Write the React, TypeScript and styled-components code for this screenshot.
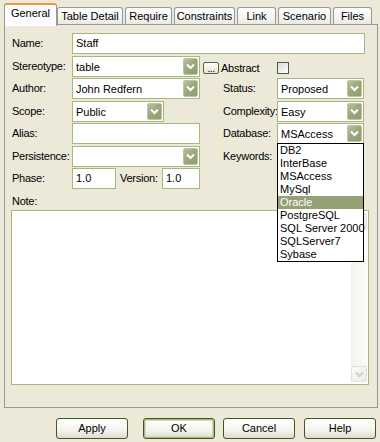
import React from "react";
import styled, { createGlobalStyle } from "styled-components";

const GlobalStyle = createGlobalStyle`
  html, body {
    margin: 0;
    padding: 0;
    background: #ece9d8;
  }
  body {
    font-family: "Liberation Sans", Arial, sans-serif;
    font-size: 11px;
    letter-spacing: -0.25px;
    color: #000;
  }
`;

const Dialog = styled.div`
  width: 380px;
  height: 442px;
  background: #ece9d8;
  display: flex;
  flex-direction: column;
  overflow: hidden;
`;

const TabStrip = styled.div`
  display: flex;
  align-items: flex-end;
  height: 24px;
  padding-left: 4px;
`;

const Tab = styled.div<{ $w: number; $active?: boolean; $first?: boolean }>`
  box-sizing: border-box;
  width: ${(p) => p.$w}px;
  height: ${(p) => (p.$active ? 23 : 17)}px;
  margin-left: ${(p) => (p.$first ? 0 : 2)}px;
  margin-bottom: ${(p) => (p.$active ? -2 : 0)}px;
  position: relative;
  z-index: ${(p) => (p.$active ? 2 : 1)};
  border: 1px solid #919b9c;
  border-bottom: none;
  border-top: ${(p) => (p.$active ? "2px solid #e39a41" : "1px solid #919b9c")};
  border-radius: 3px 3px 0 0;
  background: ${(p) =>
    p.$active ? "#fcfcfe" : "linear-gradient(#ffffff, #f3f2ee 70%, #e9e8e2)"};
  text-align: center;
  line-height: ${(p) => (p.$active ? 17 : 16)}px;
  letter-spacing: 0;
  white-space: nowrap;
  overflow: hidden;
`;

const Panel = styled.div`
  box-sizing: border-box;
  width: 374px;
  height: 384px;
  margin-left: 4px;
  border: 1px solid #919b9c;
  background: #ece9d8;
  padding: 8px 0 0 6px;
  display: flex;
  flex-direction: column;
`;

const Fields = styled.div`
  display: grid;
  grid-template-rows: 23px 22px 23px 22px 23px 22px 22px;
`;

const Row = styled.div`
  display: grid;
  grid-template-columns: 61px 150px 55px 88px;
  align-items: start;
`;

const Label = styled.div`
  height: 21px;
  line-height: 21px;
  padding-left: 1px;
  white-space: nowrap;
`;

const FieldCell = styled.div<{ $span?: boolean }>`
  display: flex;
  align-items: flex-start;
  grid-column: ${(p) => (p.$span ? "2 / span 3" : "auto")};
`;

const TextBox = styled.div<{ $w?: number }>`
  box-sizing: border-box;
  width: ${(p) => (p.$w ? `${p.$w}px` : "100%")};
  height: 21px;
  border: 1px solid #a5b880;
  background: #fff;
  padding-left: 3px;
  line-height: 19px;
  letter-spacing: 0;
  white-space: nowrap;
  overflow: hidden;
`;

const ComboBox = styled.div<{ $w: number }>`
  position: relative;
  box-sizing: border-box;
  width: ${(p) => p.$w}px;
  height: 21px;
  border: 1px solid #a5b880;
  background: #fff;
  display: flex;
  align-items: center;
  padding: 0 1px 0 3px;
  letter-spacing: 0;
`;

const ComboText = styled.span`
  flex: 1;
  white-space: nowrap;
  overflow: hidden;
`;

const ArrowButton = styled.div`
  box-sizing: border-box;
  width: 15px;
  height: 17px;
  border: 1px solid #bcc59f;
  border-radius: 2px;
  background: linear-gradient(135deg, #b8c29b 0%, #9ca87e 45%, #8f9b70 100%);
  display: flex;
  align-items: center;
  justify-content: center;
`;

const DotsButton = styled.div`
  box-sizing: border-box;
  width: 16px;
  height: 12px;
  margin: 6px 0 0 3px;
  border: 1px solid #52683a;
  border-radius: 2px;
  background: linear-gradient(#ffffff, #e6e3d6);
  font-size: 10px;
  line-height: 12px;
  text-align: center;
  letter-spacing: -0.5px;
`;

const InlineLabel = styled.div<{ $w: number; $ml?: number }>`
  width: ${(p) => p.$w}px;
  margin-left: ${(p) => p.$ml ?? 0}px;
  height: 21px;
  line-height: ${(p) => (p.$ml === 2 ? 24 : 21)}px;
  white-space: nowrap;
`;

const CheckBox = styled.div`
  box-sizing: border-box;
  width: 12px;
  height: 12px;
  margin-top: 6px;
  border: 1px solid #4f5b45;
  background: linear-gradient(135deg, #dcdbd3, #ffffff);
`;

const DropList = styled.div`
  position: absolute;
  top: 100%;
  left: -1px;
  width: 87px;
  box-sizing: border-box;
  border: 1px solid #000;
  background: #fff;
  z-index: 10;
`;

const DropItem = styled.div<{ $selected?: boolean }>`
  height: 13px;
  line-height: 13px;
  padding-left: 2px;
  white-space: nowrap;
  background: ${(p) => (p.$selected ? "#95a077" : "#fff")};
  color: ${(p) => (p.$selected ? "#fff" : "#000")};
`;

const NoteLabel = styled.div`
  height: 20px;
  padding: 5px 0 0 1px;
  box-sizing: border-box;
  line-height: 13px;
`;

const NoteBox = styled.div`
  box-sizing: border-box;
  width: 358px;
  height: 175px;
  border: 1px solid #a5b880;
  background: #fff;
  display: flex;
  justify-content: flex-end;
  padding: 2px 1px 2px 0;
`;

const ScrollBar = styled.div`
  width: 16px;
  display: flex;
  flex-direction: column;
  background: linear-gradient(90deg, #f3f3ee, #fbfbf8);
`;

const ScrollTrack = styled.div`
  flex: 1;
`;

const ScrollArrow = styled.div`
  box-sizing: border-box;
  height: 16px;
  border: 1px solid #e2e2da;
  border-radius: 2px;
  background: linear-gradient(135deg, #fbfbf8, #ebebe4);
  display: flex;
  align-items: center;
  justify-content: center;
`;

const ButtonRow = styled.div`
  display: flex;
  margin-top: 10px;
  padding-left: 56px;
`;

const DialogButton = styled.div<{ $ml?: number; $default?: boolean }>`
  box-sizing: border-box;
  width: 72px;
  height: 21px;
  margin-left: ${(p) => p.$ml ?? 0}px;
  border: 1px solid #3d5a21;
  border-radius: 3px;
  background: linear-gradient(#ffffff, #f4f3ee 60%, #dedbcc);
  box-shadow: ${(p) => (p.$default ? "inset 0 0 0 1px #aab984, inset 0 0 0 2px #d4dbbf" : "none")};
  text-align: center;
  line-height: 19px;
  letter-spacing: 0;
`;

const Chevron = ({ color }: { color: string }) => (
  <svg width="9" height="7" viewBox="0 0 9 7">
    <polyline points="1,1.5 4.5,5 8,1.5" fill="none" stroke={color} strokeWidth="2" />
  </svg>
);

const Combo = ({ w, value, children }: { w: number; value: string; children?: React.ReactNode }) => (
  <ComboBox $w={w}>
    <ComboText>{value}</ComboText>
    <ArrowButton>
      <Chevron color="#ffffff" />
    </ArrowButton>
    {children}
  </ComboBox>
);

const DATABASES = [
  "DB2",
  "InterBase",
  "MSAccess",
  "MySql",
  "Oracle",
  "PostgreSQL",
  "SQL Server 2000",
  "SQLServer7",
  "Sybase",
];

const TABS = [
  { name: "General", w: 53 },
  { name: "Table Detail", w: 66 },
  { name: "Require", w: 47 },
  { name: "Constraints", w: 61 },
  { name: "Link", w: 39 },
  { name: "Scenario", w: 53 },
  { name: "Files", w: 39 },
];

const App = () => {
  return (
    <Dialog>
      <GlobalStyle />
      <TabStrip>
        {TABS.map((tab, i) => (
          <Tab key={tab.name} $w={tab.w} $active={i === 0} $first={i <= 1}>
            {tab.name}
          </Tab>
        ))}
      </TabStrip>
      <Panel>
        <Fields>
          <Row>
            <Label>Name:</Label>
            <FieldCell $span>
              <TextBox $w={293}>Staff</TextBox>
            </FieldCell>
          </Row>
          <Row>
            <Label>Stereotype:</Label>
            <FieldCell $span>
              <Combo w={128} value="table" />
              <DotsButton>...</DotsButton>
              <InlineLabel $w={56} $ml={2}>Abstract</InlineLabel>
              <CheckBox />
            </FieldCell>
          </Row>
          <Row>
            <Label>Author:</Label>
            <FieldCell>
              <Combo w={128} value="John Redfern" />
            </FieldCell>
            <Label>Status:</Label>
            <FieldCell>
              <Combo w={87} value="Proposed" />
            </FieldCell>
          </Row>
          <Row>
            <Label>Scope:</Label>
            <FieldCell>
              <Combo w={92} value="Public" />
            </FieldCell>
            <Label>Complexity:</Label>
            <FieldCell>
              <Combo w={87} value="Easy" />
            </FieldCell>
          </Row>
          <Row>
            <Label>Alias:</Label>
            <FieldCell>
              <TextBox $w={128} />
            </FieldCell>
            <Label>Database:</Label>
            <FieldCell>
              <Combo w={87} value="MSAccess">
                <DropList>
                  {DATABASES.map((db) => (
                    <DropItem key={db} $selected={db === "Oracle"}>
                      {db}
                    </DropItem>
                  ))}
                </DropList>
              </Combo>
            </FieldCell>
          </Row>
          <Row>
            <Label>Persistence:</Label>
            <FieldCell>
              <Combo w={128} value="" />
            </FieldCell>
            <Label>Keywords:</Label>
          </Row>
          <Row>
            <Label>Phase:</Label>
            <FieldCell>
              <TextBox $w={44}>1.0</TextBox>
              <InlineLabel $w={42} $ml={4}>Version:</InlineLabel>
              <TextBox $w={38}>1.0</TextBox>
            </FieldCell>
          </Row>
        </Fields>
        <NoteLabel>Note:</NoteLabel>
        <NoteBox>
          <ScrollBar>
            <ScrollArrow>
              <svg width="9" height="7" viewBox="0 0 9 7">
                <polyline points="1,5.5 4.5,2 8,5.5" fill="none" stroke="#cfcfc6" strokeWidth="2" />
              </svg>
            </ScrollArrow>
            <ScrollTrack />
            <ScrollArrow>
              <Chevron color="#cfcfc6" />
            </ScrollArrow>
          </ScrollBar>
        </NoteBox>
      </Panel>
      <ButtonRow>
        <DialogButton>Apply</DialogButton>
        <DialogButton $ml={15} $default>OK</DialogButton>
        <DialogButton $ml={8}>Cancel</DialogButton>
        <DialogButton $ml={9}>Help</DialogButton>
      </ButtonRow>
    </Dialog>
  );
};

export default App;
